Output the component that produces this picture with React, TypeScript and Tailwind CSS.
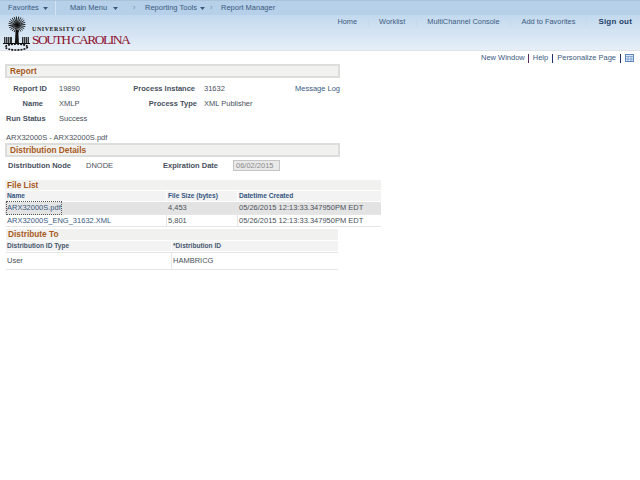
const sans = "font-['Liberation_Sans',Arial,sans-serif]";

function NavBar() {
  return (
    <div className="flex h-[15px] items-center border-t border-[#a9c3d8] bg-[#b5d0e8] text-[7.5px] text-[#3a5a82]">
      <div className="flex h-full w-[56px] items-center whitespace-nowrap border-r border-[#d3e3f1] pl-[8px]">
        Favorites<Caret className="ml-[4px]" />
      </div>
      <div className="ml-[14px] flex items-center whitespace-nowrap">
        <span className="flex w-[63px] items-center">Main Menu<Caret className="ml-[6px]" /></span>
        <span className="w-[12px] text-[#6f8fae]">›</span>
        <span className="flex w-[65px] items-center">Reporting Tools<Caret className="ml-[3px]" /></span>
        <span className="w-[11px] text-[#6f8fae]">›</span>
        <span>Report Manager</span>
      </div>
    </div>
  );
}

function Caret({ className }: { className: string }) {
  return (
    <svg width="5" height="3" viewBox="0 0 5 3" className={className}>
      <path d="M0 0h5L2.5 3z" fill="#3a5a82" />
    </svg>
  );
}

function Logo() {
  const fronds = Array.from({ length: 23 }, (_, i) => (i * 360) / 23);
  return (
    <div className="flex items-start pl-[3px]">
      <svg width="27" height="35" viewBox="0 0 27 35">
        {fronds.map((a) => (
          <line
            key={a}
            x1="14"
            y1="9"
            x2={14 + 8.5 * Math.cos((a * Math.PI) / 180)}
            y2={8.5 + 8 * Math.sin((a * Math.PI) / 180)}
            stroke="#111"
            strokeWidth="0.9"
          />
        ))}
        <path d="M12.6 14h2.6l.7 13h-4z" fill="#111" />
        <path d="M1 21h8v6H1zM19 21h7v6h-7z" fill="#333" />
        <path d="M2.5 21v6M4.5 21v6M6.5 21v6M20.5 21v6M22.5 21v6M24.5 21v6" stroke="#c9dced" strokeWidth="0.6" />
        <path d="M0 27.5h27" stroke="#111" strokeWidth="1" />
        <ellipse cx="13.5" cy="31" rx="11" ry="3" fill="none" stroke="#111" strokeWidth="1.6" strokeDasharray="2 1" />
      </svg>
      <div className="ml-[2px] mt-[9px] whitespace-nowrap font-['Liberation_Serif',serif]">
        <div className="text-[6px] leading-[8px] font-bold tracking-[0.55px] text-[#222]">UNIVERSITY OF</div>
        <div className="mt-[-1px] text-[13.5px] leading-[15px] tracking-[-1.5px] text-[#8f1230]">SOUTH CAROLINA</div>
      </div>
    </div>
  );
}

function HeaderLinks() {
  const links = ['Home', 'Worklist', 'MultiChannel Console', 'Add to Favorites'];
  return (
    <div className="mr-[8px] mt-[2px] flex items-center whitespace-nowrap text-[7.4px] leading-[10px] text-[#3a5a82]">
      {links.map((l) => (
        <span key={l} className="flex items-center">
          <span>{l}</span>
          <span className="mx-[10.5px] h-[8px] w-px bg-[#c5d8e8]" />
        </span>
      ))}
      <span className="ml-[1px] text-[8px] font-bold tracking-[0.2px] text-[#1f3f6a]">Sign out</span>
    </div>
  );
}

function SectionTitle({ children, className }: { children: string; className: string }) {
  return (
    <div className={`flex items-center border-2 border-[#dcdedc] bg-[#f1f1f0] pl-[3px] text-[8.3px] font-bold text-[#a85a1c] ${className}`}>
      {children}
    </div>
  );
}

function Label({ children, className = '' }: { children: string; className?: string }) {
  return <div className={`whitespace-nowrap font-bold text-[#47505e] ${className}`}>{children}</div>;
}

export default function App() {
  return (
    <div className={`${sans} h-[480px] w-[640px] overflow-hidden bg-white text-[7.5px] text-[#4a515b]`}>
      {/* header */}
      <div className="h-[51px] border-b border-[#dfe3e8] bg-gradient-to-b from-[#b3cfe8] to-[#e6eff8]">
        <NavBar />
        <div className="flex items-start justify-between">
          <div className="mt-[1px]"><Logo /></div>
          <HeaderLinks />
        </div>
      </div>

      {/* page links */}
      <div className="mt-[2px] flex h-[10px] items-center justify-end whitespace-nowrap pr-[6px] leading-[10px] text-[#3a5a82]">
        <span>New Window</span>
        <span className="mx-[3.5px] h-[9px] w-px bg-[#5b2a5e]" />
        <span>Help</span>
        <span className="mx-[4px] h-[9px] w-px bg-[#1f2f70]" />
        <span>Personalize Page</span>
        <span className="mx-[4px] h-[9px] w-px bg-[#1f2f70]" />
        <svg width="9" height="8" viewBox="0 0 9 8">
          <rect x="0.5" y="0.5" width="8" height="7" fill="#dbe8f6" stroke="#5e86c0" />
          <path d="M0 2.5h9M0 5h9M3 2.5v5M6 2.5v5" stroke="#5e86c0" strokeWidth="0.6" />
        </svg>
      </div>

      <div className="pl-[5px]">
        {/* report */}
        <SectionTitle className="mt-[1px] h-[14px] w-[335px]">Report</SectionTitle>

        <div className="mt-[3px] w-[336px] leading-[10px]">
          <div className="grid h-[15px] grid-cols-[42px_12px_74px_62px_9px_91px_1fr] items-center">
            <Label className="col-start-1 text-right">Report ID</Label>
            <div className="col-start-3">19890</div>
            <Label className="col-start-4 text-right">Process Instance</Label>
            <div className="col-start-6">31632</div>
            <div className="col-start-7 whitespace-nowrap text-[#3a5a82]">Message Log</div>
          </div>
          <div className="grid h-[15px] grid-cols-[38px_16px_85px_53px_7px_1fr] items-center">
            <Label className="col-start-1 text-right">Name</Label>
            <div className="col-start-3">XMLP</div>
            <Label className="col-start-4 text-right">Process Type</Label>
            <div className="col-start-6">XML Publisher</div>
          </div>
          <div className="grid h-[15px] grid-cols-[54px_1fr] items-center">
            <Label className="pl-px">Run Status</Label>
            <div>Success</div>
          </div>
        </div>

        <div className="mt-[7px] ml-px h-[10px] leading-[10px]">ARX32000S - ARX32000S.pdf</div>

        {/* distribution details */}
        <SectionTitle className="h-[14px] w-[335px]">Distribution Details</SectionTitle>
        <div className="mt-[2px] flex h-[13px] items-center">
          <Label className="ml-[3px] w-[78px]">Distribution Node</Label>
          <div className="w-[77px]">DNODE</div>
          <Label className="w-[70px]">Expiration Date</Label>
          <div className="flex h-[11px] w-[47px] items-center border border-[#c4c4c4] bg-[#e9e9e9] pl-[2px] text-[#8b8b8b]">06/02/2015</div>
        </div>

        {/* file list */}
        <div className="mt-[8px] w-[376px]">
          <div className="flex h-[10px] items-center bg-[#f1f1f0] pl-[2px] text-[8.3px] font-bold text-[#a85a1c]">File List</div>
          <div className="mt-px grid grid-cols-[161px_70px_1fr] gap-x-px text-[6.6px] font-bold text-[#34557f]">
            <div className="flex h-[10px] items-center bg-[#f3f3f3] pl-[2px]">Name</div>
            <div className="flex h-[10px] items-center bg-[#f3f3f3] pl-px">File Size (bytes)</div>
            <div className="flex h-[10px] items-center bg-[#f3f3f3] pl-px">Datetime Created</div>
          </div>
          <div className="mt-px grid h-[13px] grid-cols-[161px_70px_1fr] gap-x-px border-b border-[#e6e6e6] bg-[#e3e3e3]">
            <div className="flex items-center pl-[2px] text-[#3a5a82]"><span className="outline-1 outline-dotted outline-[#555]">ARX32000S.pdf</span></div>
            <div className="flex items-center pl-px">4,453</div>
            <div className="flex items-center pl-px">05/26/2015 12:13:33.347950PM EDT</div>
          </div>
          <div className="grid h-[12px] grid-cols-[161px_70px_1fr] gap-x-px border-b border-[#e6e6e6] bg-[#e6e6e6]">
            <div className="flex items-center bg-white pl-[2px] text-[#3a5a82]">ARX32000S_ENG_31632.XML</div>
            <div className="flex items-center bg-white pl-px">5,801</div>
            <div className="flex items-center bg-white pl-px">05/26/2015 12:13:33.347950PM EDT</div>
          </div>
        </div>

        {/* distribute to */}
        <div className="mt-[2px] ml-px w-[332px]">
          <div className="flex h-[11px] items-center bg-[#f1f1f0] pl-[2px] text-[8.3px] font-bold text-[#a85a1c]">Distribute To</div>
          <div className="mt-px grid grid-cols-[165px_1fr] gap-x-px text-[6.6px] font-bold text-[#47586e]">
            <div className="flex h-[10px] items-center bg-[#f3f3f3] pl-px">Distribution ID Type</div>
            <div className="flex h-[10px] items-center bg-[#f3f3f3] pl-px">*Distribution ID</div>
          </div>
          <div className="mt-px grid h-[18px] grid-cols-[165px_1fr] gap-x-px border-y border-[#e6e6e6] bg-[#e6e6e6]">
            <div className="flex items-center bg-white pl-px">User</div>
            <div className="flex items-center bg-white pl-px">HAMBRICG</div>
          </div>
        </div>
      </div>
    </div>
  );
}
